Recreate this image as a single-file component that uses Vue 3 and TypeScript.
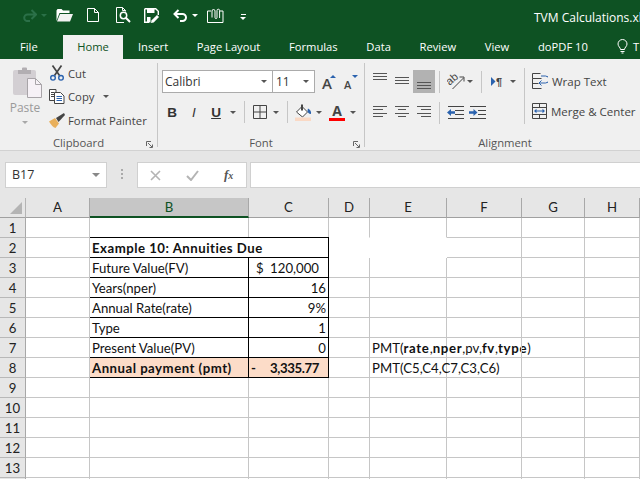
<script setup lang="ts">
type Part = { t: string; b?: boolean }

type Cell = {
  col: number
  span?: number
  text?: string
  lead?: string
  parts?: Part[]
  cls?: string
}

const tabs = ['Insert', 'Page Layout', 'Formulas', 'Data', 'Review', 'View', 'doPDF 10']
const colHeads = ['A', 'B', 'C', 'D', 'E', 'F', 'G', 'H']

const filled: Record<number, Cell[]> = {
  1: [
    { col: 4, cls: 'no-bottom' },
    { col: 5, cls: 'no-bottom' }
  ],
  2: [
    { col: 2, span: 2, text: 'Example 10: Annuities Due', cls: 'boxed bold' },
    { col: 4, span: 2, cls: 'blank' }
  ],
  3: [
    { col: 2, text: 'Future Value(FV)', cls: 'boxed' },
    { col: 3, lead: '$', text: '120,000', cls: 'boxed money dollars' }
  ],
  4: [
    { col: 2, text: 'Years(nper)', cls: 'boxed' },
    { col: 3, text: '16', cls: 'boxed right' }
  ],
  5: [
    { col: 2, text: 'Annual Rate(rate)', cls: 'boxed' },
    { col: 3, text: '9%', cls: 'boxed right' }
  ],
  6: [
    { col: 2, text: 'Type', cls: 'boxed' },
    { col: 3, text: '1', cls: 'boxed right' }
  ],
  7: [
    { col: 2, text: 'Present Value(PV)', cls: 'boxed' },
    { col: 3, text: '0', cls: 'boxed right' },
    {
      col: 5,
      cls: 'spill',
      parts: [
        { t: 'PMT(' },
        { t: 'rate', b: true },
        { t: ',' },
        { t: 'nper', b: true },
        { t: ',pv,' },
        { t: 'fv', b: true },
        { t: ',' },
        { t: 'type', b: true },
        { t: ')' }
      ]
    }
  ],
  8: [
    { col: 2, text: 'Annual payment (pmt)', cls: 'boxed bold peach' },
    { col: 3, lead: '-', text: '3,335.77', cls: 'boxed bold peach money' },
    { col: 5, text: 'PMT(C5,C4,C7,C3,C6)', cls: 'spill' }
  ]
}

const rows = Array.from({ length: 14 }, (_, i) => i + 1)

function cellsFor(row: number): Cell[] {
  const given = filled[row] ?? []
  const taken = new Set<number>()
  given.forEach((c) => {
    for (let i = 0; i < (c.span ?? 1); i++) taken.add(c.col + i)
  })
  const out = [...given]
  for (let col = 1; col <= 8; col++) {
    if (!taken.has(col)) out.push({ col })
  }
  return out
}
</script>

<template>
  <div class="app">
    <div class="titlebar">
      <div class="qat">
        <svg class="redo" width="15" height="13" viewBox="0 0 15 13"><path d="M14 5.500H5.500a3.300 3.300 0 0 0 0 6.600H8M9.500 1l4.500 4.500L9.500 10" fill="none" stroke="#2b7048" stroke-width="2" /></svg>
        <i class="tiny-arrow dim"></i>
        <svg class="open" width="17" height="14" viewBox="0 0 17 14"><path d="M.5 13V2.500L1.500 1h4L7 2.500h6.500V5H3.500L.5 13z" fill="#fff" /><path d="M4 6h13l-3 7.500H1z" fill="#f2f2f2" /></svg>
        <svg class="new" width="12" height="14" viewBox="0 0 12 14"><path d="M.5.500h7L11.500 4.500v9H.5zM7.500.5v4h4" fill="none" stroke="#fff" /></svg>
        <svg class="preview" width="15" height="16" viewBox="0 0 15 16"><path d="M8 15.500H.5V.5h6l3 3v1M6.500.5v3h3" fill="none" stroke="#fff" /><circle cx="7.500" cy="8.500" r="3.200" fill="none" stroke="#fff" stroke-width="1.500" /><path d="M9.800 10.800 14 15" stroke="#fff" stroke-width="2" /></svg>
        <svg class="save" width="15" height="15" viewBox="0 0 15 15"><path d="M.7.700h11l2.600 2.600V7M5 14.300H.7V.7" fill="none" stroke="#fff" stroke-width="1.400" /><rect x="3" y="1" width="7.500" height="4" fill="#fff" /><rect x="3" y="9" width="3.500" height="5.500" fill="#fff" /><path d="M7 15l.6-2.800L13 7l2 2-5.300 5.400z" fill="#fff" /></svg>
        <svg class="undo" width="15" height="13" viewBox="0 0 15 13"><path d="M5.500 1 1.500 5l4 4M2 5h7.500a3.500 3.500 0 0 1 0 7H7" fill="none" stroke="#fff" stroke-width="2" /></svg>
        <i class="tiny-arrow after-undo"></i>
        <svg class="clip" width="17" height="15" viewBox="0 0 17 15"><path d="M4 3H.5v11.500h15.500V3H12.500" fill="none" stroke="#fff" /><path d="M5 9.500V3a1.500 1.500 0 0 1 3 0v6.500a.9.900 0 0 0 2 0V2.500a1.300 1.300 0 0 1 2.600 0V10" fill="none" stroke="#fff" /></svg>
        <div class="qat-more"><span></span><i class="tiny-arrow"></i></div>
      </div>
      <div class="doc-title">TVM Calculations.xls</div>
    </div>

    <div class="tabbar">
      <span class="tab file">File</span>
      <span class="tab home">Home</span>
      <span v-for="t in tabs" :key="t" class="tab plain">{{ t }}</span>
      <svg class="bulb" width="11" height="15" viewBox="0 0 11 15"><path d="M3.500 10.500C3.500 8.500 1 7.500 1 5a4.500 4.500 0 0 1 9 0c0 2.500-2.500 3.500-2.500 5.500zM3.500 12.500h4M4.500 14h2" fill="none" stroke="#fff" /></svg>
      <span class="tab tell">T</span>
    </div>

    <div class="ribbon">
      <section class="group clipboard">
        <div class="group-body">
          <div class="paste">
            <svg width="29" height="31" viewBox="0 0 29 31">
              <rect x="0" y="3" width="23" height="25" rx="2" fill="#d3cfd3" />
              <path d="M5 3h4V1.500a1 1 0 0 1 1-1h3a1 1 0 0 1 1 1V3h4v4H5z" fill="#b2aeb2" />
              <path d="M14.500 11.500h8l6 6v13h-14z" fill="#f6f1f6" stroke="#a8a4a8" />
              <path d="M22.500 11.500v6h6" fill="none" stroke="#a8a4a8" />
            </svg>
            <span class="paste-label">Paste</span>
            <i class="tiny-arrow gray"></i>
          </div>
          <div class="clip-list">
            <div class="clip-item">
              <svg width="16" height="16" viewBox="0 0 16 16"><path d="M3.500 .5 10.500 10.500M12.500 .5 5.500 10.500" stroke="#444" stroke-width="1.700" /><circle cx="4" cy="12.800" r="2.300" fill="none" stroke="#2a62ae" stroke-width="1.400" /><circle cx="12" cy="12.800" r="2.300" fill="none" stroke="#2a62ae" stroke-width="1.400" /></svg>
              <span>Cut</span>
            </div>
            <div class="clip-item">
              <svg width="16" height="15" viewBox="0 0 16 15"><path d="M.5.500h6.500v11H.5z" fill="#fff" stroke="#444" /><path d="M5.500 3.500h6l3.500 3.500v7.500H5.500z" fill="#fff" stroke="#444" /><path d="M7.500 7.500h5.500M7.500 9.500h5.500M7.500 11.500h5.500" stroke="#2a62ae" /><path d="M2 3.500h3M2 5.500h3M2 7.500h3" stroke="#444" /></svg>
              <span>Copy</span>
              <i class="tiny-arrow dark copy-arrow"></i>
            </div>
            <div class="clip-item">
              <svg width="16" height="15" viewBox="0 0 16 15"><path d="M0 8.500 6 5l4 5.500-3.500 4.500C4 14.500 2 11.500 0 8.500z" fill="#e9b05c" /><path d="M7 5l8-5 1 2-6.500 7z" fill="#444" /></svg>
              <span>Format Painter</span>
            </div>
          </div>
        </div>
        <div class="group-label">
          Clipboard
          <svg class="launcher" width="7" height="7" viewBox="0 0 7 7"><path d="M.5 5V.5H5M2 2l4 4M6.500 3.500v3h-3" fill="none" stroke="#666" /></svg>
        </div>
      </section>

      <section class="group font">
        <div class="group-body font-body">
          <div class="font-row">
            <div class="combo font-name">Calibri<i class="tiny-arrow dark"></i></div>
            <div class="combo font-size">11<i class="tiny-arrow dark"></i></div>
            <div class="size-btn big">A<i class="up"></i></div>
            <div class="size-btn small">A<i class="down"></i></div>
          </div>
          <div class="font-row second">
            <b class="fmt">B</b>
            <em class="fmt italic">I</em>
            <u class="fmt under">U</u>
            <i class="tiny-arrow dark after-u"></i>
            <span class="sep after-arrow"></span>
            <svg class="borders" width="14" height="14" viewBox="0 0 14 14"><path d="M.5.500h13v13H.500zM7 .5v13M.5 7h13" fill="none" stroke="#444" /></svg>
            <i class="tiny-arrow dark after-borders"></i>
            <span class="sep after-arrow"></span>
            <svg class="fill" width="17" height="17" viewBox="0 0 17 17"><path d="M1.500 8 7 2.500 12.500 8 7.500 13z" fill="#fff" stroke="#444" /><path d="M6 .5h2v6H6z" fill="#444" /><path d="M13 4.500c2.200 1 3.500 3 3 5.500-2.200 0-3.500-1.500-3.500-3.200z" fill="#2a62ae" /><rect x="0" y="13.500" width="16" height="3.500" fill="#fad9c5" /></svg>
            <i class="tiny-arrow dark after-fill"></i>
            <div class="font-color">A<i></i></div>
            <i class="tiny-arrow dark after-color"></i>
          </div>
        </div>
        <div class="group-label">
          Font
          <svg class="launcher" width="7" height="7" viewBox="0 0 7 7"><path d="M.5 5V.5H5M2 2l4 4M6.500 3.500v3h-3" fill="none" stroke="#666" /></svg>
        </div>
      </section>

      <section class="group alignment">
        <div class="group-body align-wrap">
          <div class="align-body">
            <div class="align-row">
              <div class="lines top-a"><i></i><i></i><i></i></div>
              <div class="lines mid-a"><i></i><i></i><i></i></div>
              <div class="lines bottom-a"><i></i><i></i><i></i></div>
              <span class="sep first-sep"></span>
              <svg class="orient" width="18" height="17" viewBox="0 0 18 17"><text x="0" y="10" transform="rotate(-40 5 8)" font-size="11" font-family="Liberation Sans" fill="#444">ab</text><path d="M5.500 16 16.500 5M12.500 4h4.500v4.500" fill="none" stroke="#444" /></svg>
              <i class="tiny-arrow dark after-orient"></i>
              <span class="sep after-arrow"></span>
              <svg class="para" width="12" height="11" viewBox="0 0 12 11"><path d="M0 1l4.500 4.500L0 10z" fill="#2a62ae" /><text x="5" y="10" font-size="11" font-weight="700" font-family="Liberation Sans" fill="#444">¶</text></svg>
              <i class="tiny-arrow dark after-para"></i>
            </div>
            <div class="align-row">
              <div class="lines left"><i></i><i></i><i></i><i></i></div>
              <div class="lines center"><i></i><i></i><i></i><i></i></div>
              <div class="lines right"><i></i><i></i><i></i><i></i></div>
              <span class="sep first-sep"></span>
              <svg class="outdent" width="17" height="13" viewBox="0 0 17 13"><path d="M1 .5h16M8 4.500h9M8 8.500h9M1 12.500h16" stroke="#444" /><path d="M0 6.500l4-3.500v2.300h4v2.400H4V10z" fill="#2a62ae" /></svg>
              <svg class="indent" width="17" height="13" viewBox="0 0 17 13"><path d="M1 .5h16M9 4.500h8M9 8.500h8M1 12.500h16" stroke="#444" /><path d="M8.500 6.500 4.500 3v2.300H0v2.400h4.500V10z" fill="#2a62ae" /></svg>
            </div>
          </div>
          <div class="wrap-col">
            <div class="wrap-item">
              <svg width="16" height="16" viewBox="0 0 16 16"><path d="M.5 5.500V.5h8M.5 5.500h9M.5 5.500v10h9M.5 10.500h6" fill="none" stroke="#444" /><path d="M9 3h4.500a2 2 0 0 1 0 7H7M9.500 7.500 7 10l2.500 2.500" fill="none" stroke="#2a62ae" /></svg>
              <span>Wrap Text</span>
            </div>
            <div class="wrap-item">
              <svg width="15" height="16" viewBox="0 0 15 16"><path d="M.5.500h14v15H.500zM.5 4.500h14M.5 11.500h14M7.500.5v4M7.500 11.500v4" fill="none" stroke="#444" /><path d="M3 8h9" stroke="#2a62ae" /><path d="M2 8l2.500-2.200v4.400zM13 8l-2.500-2.200v4.400z" fill="#2a62ae" /></svg>
              <span>Merge &amp; Center</span>
            </div>
          </div>
        </div>
        <div class="group-label">Alignment</div>
      </section>
    </div>

    <div class="formula-bar">
      <div class="name-box">B17<i class="name-arrow"></i></div>
      <div class="dots"><i></i><i></i><i></i></div>
      <div class="fx-box">
        <svg width="11" height="11" viewBox="0 0 11 11"><path d="M1 1l9 9M10 1l-9 9" stroke="#b4b4b4" stroke-width="1.600" /></svg>
        <svg width="13" height="11" viewBox="0 0 13 11"><path d="M1 6l4 4 7-9" fill="none" stroke="#b4b4b4" stroke-width="2" /></svg>
        <span class="fx">f<small>x</small></span>
      </div>
      <div class="formula-input"></div>
    </div>

    <div class="sheet">
      <div class="corner"><i></i></div>
      <div v-for="h in colHeads" :key="h" class="col-head" :class="{ selected: h === 'B' }">{{ h }}</div>
      <template v-for="r in rows" :key="r">
        <div class="row-head" :style="{ gridRow: r + 1 }">{{ r < 14 ? r : '' }}</div>
        <div
          v-for="c in cellsFor(r)"
          :key="c.col"
          class="cell"
          :class="c.cls"
          :style="{ gridRow: r + 1, gridColumn: `${c.col + 1} / span ${c.span ?? 1}` }"
        >
          <span v-if="c.lead">{{ c.lead }}</span>
          <template v-if="c.parts">
            <template v-for="(p, i) in c.parts" :key="i"><b v-if="p.b">{{ p.t }}</b><template v-else>{{ p.t }}</template></template>
          </template>
          <span v-else-if="c.text">{{ c.text }}</span>
        </div>
      </template>
    </div>
  </div>
</template>

<style>
html,
body {
  margin: 0;
  overflow: hidden;
  background: #fff;
}
</style>

<style scoped>
.app {
  width: 640px;
  height: 479px;
  overflow: hidden;
  font-family: "Open Sans", "Liberation Sans", sans-serif;
  font-size: 11.3px;
  color: #444;
  background: #fff;
}

.titlebar {
  height: 35px;
  background: #0e5223;
  display: flex;
  color: #fff;
}

.qat {
  flex: 0 0 534px;
  box-sizing: border-box;
  display: flex;
  align-items: center;
  padding: 0 0 5px 22px;
}

.qat .tiny-arrow.dim {
  margin-left: 4px;
}

.qat .open {
  margin-left: 9px;
}

.qat .new {
  margin-left: 14px;
}

.qat .preview {
  margin-left: 17px;
}

.qat .save {
  margin-left: 13px;
}

.qat .undo {
  margin-left: 14px;
}

.qat .after-undo {
  margin-left: 4px;
}

.qat .clip {
  margin-left: 9px;
}

.qat-more {
  margin-left: 16px;
  display: flex;
  flex-direction: column;
  gap: 2px;
  align-items: center;
  padding-top: 3px;
}

.qat-more span {
  width: 5px;
  height: 1px;
  background: #fff;
}

.tiny-arrow {
  display: inline-block;
  flex: none;
  width: 0;
  height: 0;
  border-left: 3px solid transparent;
  border-right: 3px solid transparent;
  border-top: 3px solid #fff;
}

.tiny-arrow.dim {
  border-top-color: #2b7048;
}

.tiny-arrow.gray {
  border-top-color: #a8a8a8;
}

.tiny-arrow.dark {
  border-top-color: #555;
}

.doc-title {
  font-size: 12px;
  padding-top: 9px;
  white-space: nowrap;
}

.tabbar {
  height: 24px;
  background: #0e5223;
  display: flex;
  color: #fff;
}

.tab {
  flex: none;
  line-height: 24px;
  white-space: nowrap;
  font-size: 11.2px;
}

.tab.file {
  margin-left: 20px;
  width: 29px;
}

.tab.home {
  width: 60px;
  margin-left: 14px;
  margin-right: 15px;
  text-align: center;
  background: #f0f0f0;
  color: #0e5223;
}

.tab.plain + .tab.plain {
  margin-left: 28.7px;
}

.bulb {
  flex: none;
  margin: 4px 0 0 29px;
}

.tab.tell {
  margin-left: 5px;
}

.ribbon {
  height: 92px;
  background: #f0f0f0;
  border-bottom: 1px solid #d2d2d2;
  display: flex;
  box-sizing: border-box;
}

.group {
  flex: none;
  display: flex;
  flex-direction: column;
  box-sizing: border-box;
  border-right: 1px solid #c6c6c6;
  margin-top: 4px;
  height: 84px;
}

.group-body {
  display: flex;
  height: 72px;
}

.group-label {
  flex: none;
  position: relative;
  height: 16px;
  line-height: 16px;
  margin-bottom: -4px;
  text-align: center;
  color: #555;
  font-size: 11.300px;
}

.launcher {
  position: absolute;
  right: 4px;
  top: 6px;
}

.clipboard {
  width: 158px;
}

.paste {
  width: 50px;
  flex: none;
  display: flex;
  flex-direction: column;
  align-items: center;
  padding-top: 4px;
  color: #9a9a9a;
}

.paste svg {
  margin-left: 4px;
}

.paste-label {
  margin-top: 2px;
  line-height: 16px;
  font-size: 12px;
}

.paste .tiny-arrow {
  margin-top: 5px;
}

.clip-list {
  display: flex;
  flex-direction: column;
  gap: 5.500px;
  padding-top: 1px;
  margin-left: -1px;
}

.clip-item {
  height: 18px;
  display: flex;
  align-items: center;
  gap: 3px;
  white-space: nowrap;
  font-size: 11.300px;
}

.clip-item .copy-arrow {
  margin-left: 6px;
}

.font {
  width: 207px;
}

.font-body {
  flex-direction: column;
  padding: 7px 0 0 4px;
  box-sizing: border-box;
}

.font-row {
  display: flex;
  align-items: center;
}

.font-row.second {
  margin-top: 8px;
  height: 22px;
}

.combo {
  height: 23px;
  box-sizing: border-box;
  border: 1px solid #ababab;
  background: #fff;
  line-height: 21px;
  padding-left: 2px;
  position: relative;
  color: #333;
  font-size: 12px;
}

.combo i {
  position: absolute;
  right: 5px;
  top: 9px;
}

.font-name {
  width: 111px;
}

.font-size {
  width: 43px;
  margin-left: -1px;
  padding-left: 3px;
}

.size-btn {
  color: #444;
  position: relative;
  font-weight: 600;
  align-self: flex-end;
  height: 20px;
  line-height: 20px;
}

.size-btn.big {
  font-size: 15px;
  margin-left: 7px;
  width: 22px;
}

.size-btn.small {
  font-size: 11px;
  width: 20px;
  line-height: 23px;
}

.size-btn i {
  position: absolute;
  top: 2px;
  left: 8px;
  border-left: 3px solid transparent;
  border-right: 3px solid transparent;
}

.size-btn .up {
  border-bottom: 3px solid #2a62ae;
}

.size-btn .down {
  border-top: 3px solid #2a62ae;
}

.fmt {
  width: 14px;
  flex: none;
  text-align: center;
  font-size: 13.500px;
  font-family: "Liberation Sans", sans-serif;
  color: #333;
  margin-left: 3px;
}

.fmt.italic {
  margin-left: 8px;
}

.fmt.under {
  margin-left: 8px;
  font-weight: 700;
}

.after-u {
  margin-left: 7px;
}

.sep {
  width: 1px;
  height: 22px;
  background: #c6c6c6;
  flex: none;
}

.sep.after-arrow {
  margin-left: 8px;
}

.borders {
  margin-left: 8px;
}

.after-borders {
  margin-left: 6px;
}

.fill {
  margin-left: 7px;
}

.after-fill {
  margin-left: 4px;
}

.font-color {
  margin-left: 7px;
  width: 16px;
  font-size: 14px;
  font-weight: 700;
  text-align: center;
  line-height: 14px;
}

.font-color i {
  display: block;
  width: 16px;
  height: 3px;
  background: #f00;
}

.after-color {
  margin-left: 5px;
}

.alignment {
  width: 280px;
  border-right: none;
}

.align-body {
  flex: 0 0 159px;
  box-sizing: border-box;
  padding: 7px 0 0 4px;
}

.align-row {
  display: flex;
  align-items: center;
  height: 23px;
  margin-bottom: 8px;
}

.lines {
  flex: none;
  width: 22px;
  height: 23px;
  display: flex;
  flex-direction: column;
  justify-content: center;
  padding: 3px 4px;
  box-sizing: border-box;
}

.lines i {
  height: 1px;
  background: #555;
  margin-bottom: 2px;
}

.lines.left i,
.lines.center i,
.lines.right i {
  margin-bottom: 2.500px;
}

.top-a {
  justify-content: flex-start;
}

.bottom-a {
  justify-content: flex-end;
  background: #b2b2b2;
  padding-bottom: 2px;
}

.left i:nth-child(even) {
  margin-right: 4px;
}

.center i:nth-child(even) {
  margin-left: 3px;
  margin-right: 3px;
}

.right i:nth-child(even) {
  margin-left: 4px;
}

.first-sep {
  margin-left: 4px;
}

.orient {
  margin-left: 7px;
}

.after-orient {
  margin-left: 2px;
}

.para {
  margin-left: 9px;
}

.after-para {
  margin-left: 7px;
}

.outdent {
  margin-left: 7px;
}

.indent {
  margin-left: 5px;
}

.wrap-col {
  flex: none;
  box-sizing: border-box;
  margin-top: 5px;
  height: 56px;
  padding: 2px 0 0 7px;
  display: flex;
  flex-direction: column;
  gap: 8px;
  border-left: 1px solid #c6c6c6;
}

.wrap-item {
  display: flex;
  align-items: center;
  gap: 4px;
  white-space: nowrap;
  height: 22px;
  font-size: 11.500px;
}

.formula-bar {
  height: 47px;
  background: #e6e6e6;
  display: flex;
  align-items: flex-start;
  padding-top: 11px;
  box-sizing: border-box;
}

.name-box {
  margin-left: 5px;
  width: 102px;
  height: 26px;
  box-sizing: border-box;
  border: 1px solid #d0d0d0;
  background: #fff;
  line-height: 24px;
  padding-left: 6px;
  color: #333;
  position: relative;
  font-size: 12.500px;
}

.name-arrow {
  position: absolute;
  right: 6px;
  top: 10px;
  border-left: 4px solid transparent;
  border-right: 4px solid transparent;
  border-top: 4px solid #888;
}

.dots {
  width: 30px;
  display: flex;
  flex-direction: column;
  align-items: center;
  gap: 2px;
  padding-top: 7px;
}

.dots i {
  width: 2px;
  height: 2px;
  background: #aaa;
}

.fx-box {
  width: 110px;
  height: 26px;
  box-sizing: border-box;
  border: 1px solid #d0d0d0;
  background: #fff;
  display: flex;
  align-items: center;
  gap: 25px;
  padding-left: 12px;
}

.fx {
  font-family: "Liberation Serif", serif;
  font-style: italic;
  font-weight: 700;
  font-size: 13px;
  color: #555;
}

.fx small {
  font-size: 10px;
}

.formula-input {
  flex: 1;
  height: 26px;
  margin-left: 3px;
  box-sizing: border-box;
  border: 1px solid #d0d0d0;
  border-right: none;
  background: #fff;
}

.sheet {
  display: grid;
  grid-template-columns: 26px 64px 159px 80px 41px 77px 75px 63px 55px;
  grid-template-rows: repeat(15, 20px);
  font-family: Lato, "Liberation Sans", sans-serif;
  font-size: 13.200px;
  color: #111;
}

.corner {
  background: #e6e6e6;
  border-right: 1px solid #b4b4b4;
  border-bottom: 1px solid #a0a0a0;
  box-sizing: border-box;
  position: relative;
}

.corner i {
  position: absolute;
  right: 3px;
  bottom: 3px;
  width: 0;
  height: 0;
  border-left: 12px solid transparent;
  border-bottom: 12px solid #b4b4b4;
}

.col-head {
  background: #e6e6e6;
  box-sizing: border-box;
  border-right: 1px solid #a8a8a8;
  border-bottom: 1px solid #a0a0a0;
  text-align: center;
  line-height: 19px;
  color: #222;
}

.col-head.selected {
  background: #c6c6c6;
  border-bottom: 2px solid #0e5223;
  color: #0e5223;
}

.row-head {
  grid-column: 1;
  background: #e6e6e6;
  box-sizing: border-box;
  border-right: 1px solid #a8a8a8;
  border-bottom: 1px solid #b8b8b8;
  text-align: center;
  line-height: 20px;
  color: #222;
}

.cell {
  box-sizing: border-box;
  border-right: 1px solid #c6c6c6;
  border-bottom: 1px solid #c6c6c6;
  padding: 0 2px;
  line-height: 20px;
  white-space: nowrap;
  min-width: 0;
}

.cell b {
  letter-spacing: 0.7px;
}

.cell.no-bottom {
  border-bottom-color: #fff;
}

.cell.blank {
  border-color: #fff;
}

.cell.boxed {
  border-right: 1px solid #000;
  border-bottom: 1px solid #000;
  box-shadow: -1px 0 0 #000, 0 -1px 0 #000;
}

.cell.bold {
  font-weight: 700;
  letter-spacing: 0.5px;
}

.cell.peach {
  background: #fcdcc8;
}

.cell.right {
  text-align: right;
}

.cell.money {
  display: flex;
  justify-content: space-between;
  padding-right: 9px;
}

.cell.money.bold {
  letter-spacing: -0.4px;
}

.cell.dollars {
  padding-left: 7px;
}
</style>
